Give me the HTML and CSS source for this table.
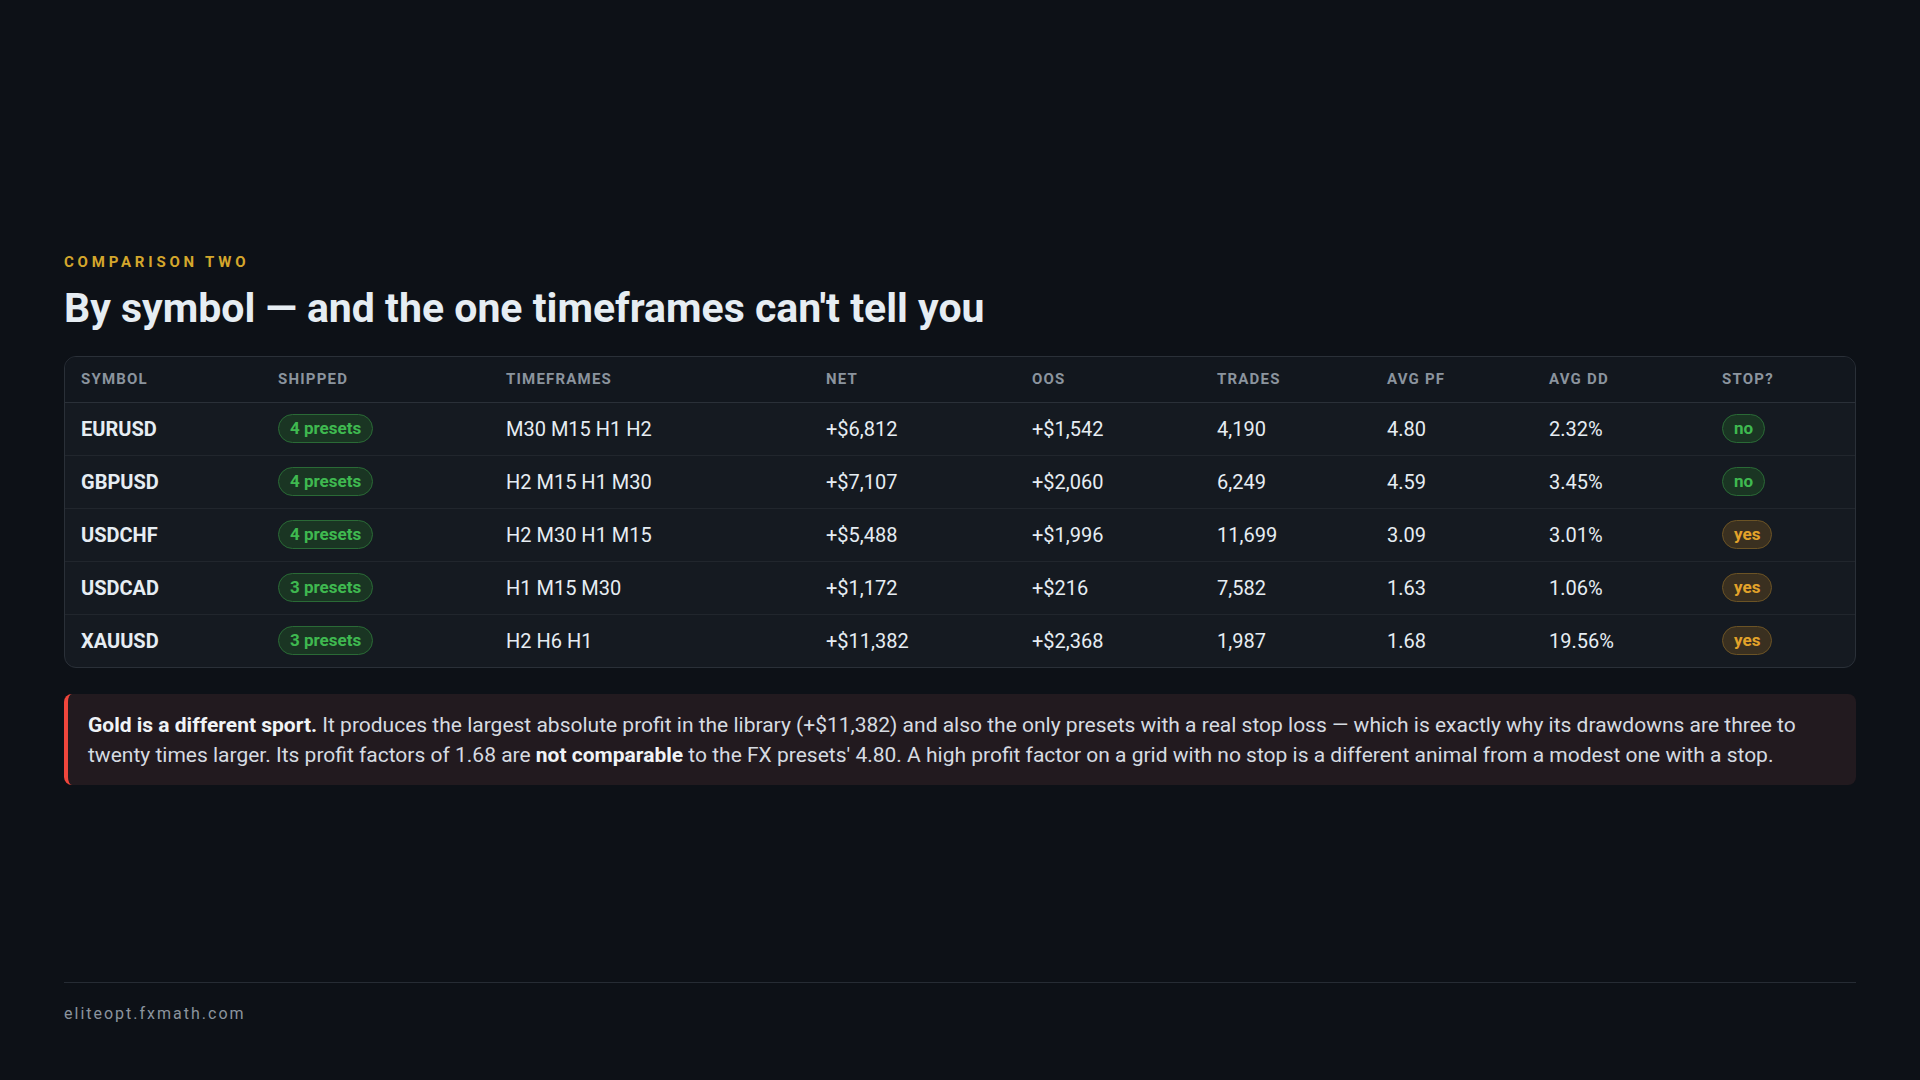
FILE: index.html
```html
<!DOCTYPE html>
<html lang="en">
<head>
<meta charset="utf-8">
<title>By symbol</title>
<link rel="stylesheet" href="styles.css">
</head>
<body>
<div class="slide">
  <main class="main">
    <div class="eyebrow">COMPARISON TWO</div>
    <h1 class="title">By symbol — and the one timeframes can't tell you</h1>
    <div class="card">
      <table class="tbl">
        <colgroup>
          <col class="c1"><col class="c2"><col class="c3"><col class="c4"><col class="c5"><col class="c6"><col class="c7"><col class="c8"><col class="c9">
        </colgroup>
        <thead>
          <tr><th>SYMBOL</th><th>SHIPPED</th><th>TIMEFRAMES</th><th>NET</th><th>OOS</th><th>TRADES</th><th>AVG PF</th><th>AVG DD</th><th>STOP?</th></tr>
        </thead>
        <tbody>
          <tr><td class="sym">EURUSD</td><td><span class="pill green">4 presets</span></td><td>M30 M15 H1 H2</td><td>+$6,812</td><td>+$1,542</td><td>4,190</td><td>4.80</td><td>2.32%</td><td><span class="pill green">no</span></td></tr>
          <tr><td class="sym">GBPUSD</td><td><span class="pill green">4 presets</span></td><td>H2 M15 H1 M30</td><td>+$7,107</td><td>+$2,060</td><td>6,249</td><td>4.59</td><td>3.45%</td><td><span class="pill green">no</span></td></tr>
          <tr><td class="sym">USDCHF</td><td><span class="pill green">4 presets</span></td><td>H2 M30 H1 M15</td><td>+$5,488</td><td>+$1,996</td><td>11,699</td><td>3.09</td><td>3.01%</td><td><span class="pill amber">yes</span></td></tr>
          <tr><td class="sym">USDCAD</td><td><span class="pill green">3 presets</span></td><td>H1 M15 M30</td><td>+$1,172</td><td>+$216</td><td>7,582</td><td>1.63</td><td>1.06%</td><td><span class="pill amber">yes</span></td></tr>
          <tr><td class="sym">XAUUSD</td><td><span class="pill green">3 presets</span></td><td>H2 H6 H1</td><td>+$11,382</td><td>+$2,368</td><td>1,987</td><td>1.68</td><td>19.56%</td><td><span class="pill amber">yes</span></td></tr>
        </tbody>
      </table>
    </div>
    <div class="callout">
      <p><strong>Gold is a different sport.</strong> It produces the largest absolute profit in the library (+$11,382) and also the only presets with a real stop loss — which is exactly why its drawdowns are three to twenty times larger. Its profit factors of 1.68 are <strong>not comparable</strong> to the FX presets' 4.80. A high profit factor on a grid with no stop is a different animal from a modest one with a stop.</p>
    </div>
  </main>
  <footer class="footer">eliteopt.fxmath.com</footer>
</div>
</body>
</html>
```

FILE: styles.css
```css
* { box-sizing: border-box; }
html, body { margin: 0; padding: 0; }
body {
  background: #0d1117;
  color: #e6edf3;
  font-family: Roboto, "Noto Sans", "Liberation Sans", sans-serif;
}
.slide {
  width: 1920px;
  height: 1080px;
  padding: 0 64px;
  display: flex;
  flex-direction: column;
}
.main {
  flex: 1;
  display: flex;
  flex-direction: column;
  justify-content: center;
  padding-top: 64px;
  padding-bottom: 8px;
}
.eyebrow {
  color: #d4a72c;
  font-size: 15px;
  font-weight: 700;
  letter-spacing: 3.8px;
  line-height: 18px;
}
.title {
  margin: 13px 0 24px;
  font-size: 41px;
  font-weight: 700;
  letter-spacing: 0;
  line-height: 48px;
  color: #e6edf3;
}
.card {
  background: #151a21;
  border: 1px solid #2a3038;
  border-radius: 12px;
  overflow: hidden;
}
.tbl {
  width: 100%;
  border-collapse: collapse;
  table-layout: fixed;
}
.c1 { width: 197px; }
.c2 { width: 228px; }
.c3 { width: 320px; }
.c4 { width: 206px; }
.c5 { width: 185px; }
.c6 { width: 170px; }
.c7 { width: 162px; }
.c8 { width: 173px; }
.c9 { width: auto; }
.tbl th {
  text-align: left;
  font-size: 15px;
  font-weight: 700;
  letter-spacing: 1.2px;
  color: #8b949e;
  height: 45px;
  padding: 0 16px;
  border-bottom: 1px solid #2a3038;
  background: #12171e;
}
.tbl td {
  height: 53px;
  padding: 0 16px;
  font-size: 20px;
  color: #e6edf3;
  border-bottom: 1px solid #21262d;
}
.tbl tbody tr:last-child td { border-bottom: none; }
.tbl td.sym { font-weight: 700; }
.pill {
  display: inline-block;
  height: 29px;
  line-height: 27px;
  padding: 0 11px;
  border-radius: 15px;
  font-size: 17px;
  font-weight: 700;
  border: 1px solid;
  vertical-align: middle;
}
.pill.green {
  color: #3fb950;
  background: #1a3523;
  border-color: #2a6a36;
}
.pill.amber {
  color: #e3a32a;
  background: #3a3020;
  border-color: #6b5325;
}
.callout {
  margin-top: 26px;
  background: #221a1f;
  border-left: 4px solid #f0463c;
  border-radius: 8px;
  padding: 16px 20px 15px;
}
.callout p {
  margin: 0;
  font-size: 21px;
  line-height: 30px;
  color: #d6dbe1;
}
.callout strong { color: #f0f3f6; font-weight: 700; }
.footer {
  border-top: 1px solid #262c34;
  padding: 21px 0 57px;
  font-size: 16px;
  letter-spacing: 2px;
  color: #8b949e;
  line-height: 19px;
}
```
